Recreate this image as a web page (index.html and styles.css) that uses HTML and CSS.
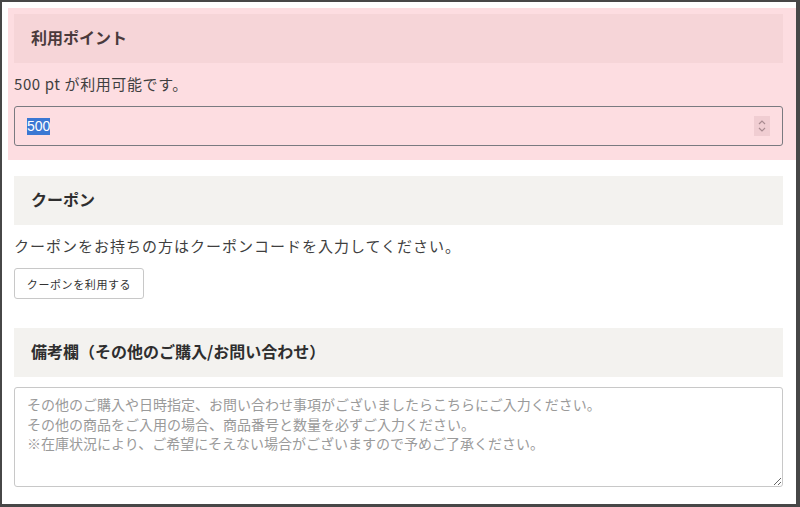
FILE: index.html
```html
<!DOCTYPE html>
<html lang="ja">
<head>
  <meta charset="UTF-8">
  <meta name="viewport" content="width=device-width, initial-scale=1.0">
  <title>ご注文手続き</title>
  <link rel="stylesheet" href="styles.css">
</head>
<body>
  <div class="frame">
    <section class="block block-point">
      <h2 class="block-title">利用ポイント</h2>
      <p class="block-text">500 pt が利用可能です。</p>
      <div class="point-input">
        <span class="point-value">500</span>
        <span class="spinner">
          <svg width="16" height="20" viewBox="0 0 16 20">
            <rect width="16" height="20" fill="#f0cdd2"/>
            <path d="M5 8 L8 5 L11 8" fill="none" stroke="#a88a90" stroke-width="1.2"/>
            <path d="M5 12 L8 15 L11 12" fill="none" stroke="#a88a90" stroke-width="1.2"/>
          </svg>
        </span>
      </div>
    </section>

    <section class="block">
      <h2 class="block-title">クーポン</h2>
      <p class="block-text">クーポンをお持ちの方はクーポンコードを入力してください。</p>
      <button class="coupon-btn">クーポンを利用する</button>
    </section>

    <section class="block">
      <h2 class="block-title">備考欄（その他のご購入/お問い合わせ）</h2>
      <textarea class="note" placeholder="その他のご購入や日時指定、お問い合わせ事項がございましたらこちらにご入力ください。&#10;その他の商品をご入用の場合、商品番号と数量を必ずご入力ください。&#10;※在庫状況により、ご希望にそえない場合がございますので予めご了承ください。"></textarea>
    </section>
  </div>
</body>
</html>
```

FILE: styles.css
```css
* {
  box-sizing: border-box;
}
html, body {
  margin: 0;
  padding: 0;
  height: 100%;
  background: #ffffff;
}
body {
  font-family: "Noto Sans CJK JP", "Noto Sans", sans-serif;
  color: #3f3f3f;
}
.frame {
  height: 507px;
  border-style: solid;
  border-color: #474747;
  border-width: 2px 4px 3px 2px;
  padding: 6px 0 0 6px;
  overflow: hidden;
}
.block {
  padding: 0 13px 0 6px;
  margin-bottom: 29px;
}
.block-point {
  background: #fddde1;
  padding-top: 6px;
  padding-bottom: 14px;
  margin-bottom: 16px;
}
.block-title {
  margin: 0;
  height: 49px;
  line-height: 47px;
  padding-left: 17px;
  font-size: 16px;
  font-weight: bold;
  background: #f3f2ef;
  color: #2e2e2e;
}
.block-point .block-title {
  background: #f6d5d8;
  color: #4a3a3c;
}
.block-text {
  margin: 10px 0 11px;
  font-size: 15px;
  line-height: 22px;
  letter-spacing: 1px;
}
.block-point .block-text {
  margin: 10px 0 11px;
  letter-spacing: 0.6px;
}
.point-input {
  position: relative;
  height: 40px;
  border: 1px solid #7a7a80;
  border-radius: 3px;
  padding-left: 12px;
  display: flex;
  align-items: center;
}
.point-value {
  background: #3b78d3;
  color: #ffffff;
  font-family: "Liberation Sans", Arial, sans-serif;
  font-size: 14px;
  line-height: 17px;
}
.spinner {
  position: absolute;
  right: 12px;
  top: 9px;
  display: flex;
}
.coupon-btn {
  height: 31px;
  width: 130px;
  padding: 0;
  background: #ffffff;
  border: 1px solid #c8c8c8;
  border-radius: 3px;
  font-family: "Noto Sans CJK JP", sans-serif;
  font-size: 11px;
  letter-spacing: 0.6px;
  color: #333333;
}
.note {
  display: block;
  width: 100%;
  height: 100px;
  margin-top: 10px;
  padding: 7px 12px;
  border: 1px solid #c8c8c8;
  border-radius: 3px;
  font-family: "Noto Sans CJK JP", sans-serif;
  font-size: 14px;
  line-height: 19.5px;
  color: #333333;
}
.note::placeholder {
  color: #9a9a9a;
}
```
